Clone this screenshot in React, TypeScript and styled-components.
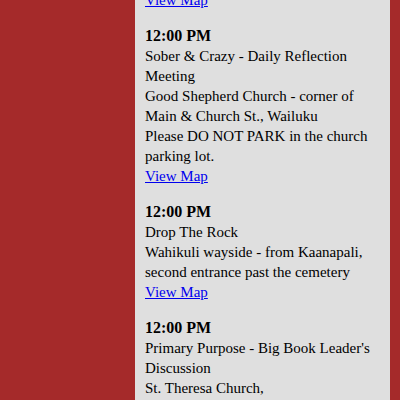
import styled, { createGlobalStyle } from 'styled-components';

const GlobalStyle = createGlobalStyle`
html, body {
margin: 0;
padding: 0;
}
body {
background-color: #a52a2a;
font-family: "Liberation Serif", "Times New Roman", serif;
font-size: 16px;
color: #000;
overflow: hidden;
}
`;

const Page = styled.div`
display: flex;
width: 400px;
height: 400px;
overflow: hidden;
`;

const Panel = styled.div`
margin-left: 135px;
width: 255px;
box-sizing: border-box;
padding: 0 10px;
background-color: #dfdfdf;
height: 400px;
overflow: hidden;
`;

const List = styled.div`
display: flex;
flex-direction: column;
gap: 16px;
margin-top: -10px;
`;

const Meeting = styled.div`
line-height: 20px;
font-size: 15px;
`;

const Time = styled.div`
font-weight: bold;
font-size: 16px;
`;

const Line = styled.div``;

const MapLink = styled.a`
color: #0000ee;
text-decoration: underline;
cursor: pointer;
`;

type MeetingItem = {
    time?: string
    lines: string[]
    map: boolean
}

const meetings: MeetingItem[] = [
    { lines: [], map: true },
    {
        time: '12:00 PM',
        lines: [
            'Sober & Crazy - Daily Reflection Meeting',
            'Good Shepherd Church - corner of Main & Church St., Wailuku',
            'Please DO NOT PARK in the church parking lot.',
        ],
        map: true,
    },
    {
        time: '12:00 PM',
        lines: [
            'Drop The Rock',
            'Wahikuli wayside - from Kaanapali, second entrance past the cemetery',
        ],
        map: true,
    },
    {
        time: '12:00 PM',
        lines: [
            "Primary Purpose - Big Book Leader's Discussion",
            'St. Theresa Church,',
            'Kihei',
        ],
        map: true,
    },
];

const App = () => {
    return (
        <>
            <GlobalStyle />
            <Page>
                <Panel>
                    <List>
                        {meetings.map((m, i) => (
                            <Meeting key={i}>
                                {m.time && <Time>{m.time}</Time>}
                                {m.lines.map((l, j) => (
                                    <Line key={j}>{l}</Line>
                                ))}
                                {m.map && <MapLink href="#">View Map</MapLink>}
                            </Meeting>
                        ))}
                    </List>
                </Panel>
            </Page>
        </>
    )
}

export default App
